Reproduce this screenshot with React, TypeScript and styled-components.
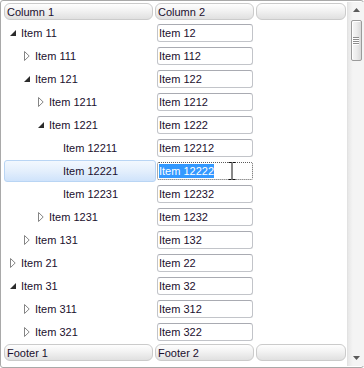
import React from 'react';
import styled, { createGlobalStyle, css } from 'styled-components';

const GlobalStyle = createGlobalStyle`
  html, body {
    margin: 0;
    padding: 0;
    background: #ffffff;
  }
  body {
    font-family: 'Liberation Sans', Arial, sans-serif;
    font-size: 11px;
    color: #1b0f2e;
  }
`;

type Row = {
  name: string;
  value: string;
  level: number;
  state: 'open' | 'closed' | 'leaf';
  selected?: boolean;
};

const rows: Row[] = [
  { name: 'Item 11', value: 'Item 12', level: 0, state: 'open' },
  { name: 'Item 111', value: 'Item 112', level: 1, state: 'closed' },
  { name: 'Item 121', value: 'Item 122', level: 1, state: 'open' },
  { name: 'Item 1211', value: 'Item 1212', level: 2, state: 'closed' },
  { name: 'Item 1221', value: 'Item 1222', level: 2, state: 'open' },
  { name: 'Item 12211', value: 'Item 12212', level: 3, state: 'leaf' },
  { name: 'Item 12221', value: 'Item 12222', level: 3, state: 'leaf', selected: true },
  { name: 'Item 12231', value: 'Item 12232', level: 3, state: 'leaf' },
  { name: 'Item 1231', value: 'Item 1232', level: 2, state: 'closed' },
  { name: 'Item 131', value: 'Item 132', level: 1, state: 'closed' },
  { name: 'Item 21', value: 'Item 22', level: 0, state: 'closed' },
  { name: 'Item 31', value: 'Item 32', level: 0, state: 'open' },
  { name: 'Item 311', value: 'Item 312', level: 1, state: 'closed' },
  { name: 'Item 321', value: 'Item 322', level: 1, state: 'closed' },
];

const Frame = styled.div`
  box-sizing: border-box;
  width: 364px;
  height: 368px;
  border: 1px solid #a9a9a9;
  border-radius: 3px;
  padding: 2px 1px 1px 3px;
  display: grid;
  grid-template-columns: 1fr 17px;
  column-gap: 1px;
`;

const Main = styled.div`
  display: flex;
  flex-direction: column;
`;

const columns = css`
  display: grid;
  grid-template-columns: 149px 99px 90px;
  column-gap: 2px;
`;

const HeaderRow = styled.div`
  ${columns};
  height: 17px;
  margin-bottom: 1px;
`;

const FooterRow = styled(HeaderRow)`
  margin: 1px 0 0;
`;

const HeaderCell = styled.div`
  box-sizing: border-box;
  height: 17px;
  border: 1px solid #cbcbcb;
  border-radius: 6px;
  background: linear-gradient(#fefefe 0%, #f2f2f2 45%, #e0e0e0 100%);
  padding: 1px 0 0 2px;
  line-height: 14px;
  white-space: nowrap;
  color: #1b0f2e;
`;

const List = styled.div`
  display: flex;
  flex-direction: column;
`;

const RowLine = styled.div`
  ${columns};
  height: 23px;
  position: relative;
`;

const TreeCell = styled.div<{ $level: number; $selected?: boolean }>`
  display: flex;
  align-items: center;
  padding-left: ${(p) => p.$level * 14}px;
  box-sizing: border-box;
  border: 1px solid transparent;
  border-radius: 3px;
  margin: 1px -3px 0 0;
  ${(p) =>
    p.$selected &&
    css`
      border-color: #b9d5f4;
      background: linear-gradient(#f3f8fe 0%, #e4effc 50%, #cfe3fb 100%);
    `}
`;

const Expander = styled.span`
  width: 16px;
  height: 16px;
  display: flex;
  align-items: center;
  justify-content: center;
  flex: none;
`;

const Label = styled.span`
  white-space: nowrap;
  margin-top: 0;
`;

const ValueCell = styled.div`
  display: flex;
  align-items: center;
  padding: 0 1px 0 2px;
  position: relative;
`;

const TextBox = styled.div<{ $focused?: boolean }>`
  box-sizing: border-box;
  width: 96px;
  height: 18px;
  border: 1px solid #c2c4c9;
  border-top-color: #a9abb2;
  border-radius: 3px;
  background: #ffffff;
  padding: 0 0 0 1px;
  line-height: 16px;
  white-space: nowrap;
  ${(p) =>
    p.$focused &&
    css`
      border: 1px dotted #5b5b5b;
      border-radius: 2px;
    `}
`;

const Selection = styled.span`
  background: #3399ff;
  color: #ffffff;
  padding: 1px 0;
`;

const Caret = styled.svg`
  position: absolute;
  left: 73px;
  top: 3px;
`;

const Scrollbar = styled.div`
  display: flex;
  flex-direction: column;
  align-items: center;
  background: linear-gradient(90deg, #e7e7e7 0%, #f4f4f4 30%, #f4f4f4 100%);
  border-left: 1px solid #e2e2e2;
  margin-top: -1px;
`;

const ArrowButton = styled.div`
  height: 16px;
  width: 100%;
  display: flex;
  align-items: center;
  justify-content: center;
`;

const Track = styled.div`
  flex: 1;
  width: 100%;
  display: flex;
  flex-direction: column;
  align-items: center;
`;

const Thumb = styled.div`
  box-sizing: border-box;
  width: 11px;
  height: 41px;
  margin-top: 2px;
  border: 1px solid #9b9b9b;
  border-radius: 2px;
  background: linear-gradient(90deg, #f6f6f6 0%, #ececec 50%, #d9d9d9 100%);
  box-shadow: inset 1px 1px 0 #ffffff;
  display: flex;
  flex-direction: column;
  align-items: center;
  justify-content: center;
  gap: 1px;
`;

const Grip = styled.span`
  width: 6px;
  height: 1px;
  background: #8d8d8d;
  box-shadow: 0 1px 0 #ffffff;
`;

const OpenArrow = () => (
  <svg width="6" height="6" viewBox="0 0 6 6">
    <polygon points="0,6 6,6 6,0" fill="#2b2b2b" />
  </svg>
);

const ClosedArrow = () => (
  <svg width="6" height="10" viewBox="0 0 6 10">
    <polygon points="0.5,0.5 5.2,5 0.5,9.5" fill="#ffffff" stroke="#858585" strokeWidth="1" />
  </svg>
);

const App: React.FC = () => (
  <>
    <GlobalStyle />
    <Frame>
      <Main>
        <HeaderRow>
          <HeaderCell>Column 1</HeaderCell>
          <HeaderCell>Column 2</HeaderCell>
          <HeaderCell />
        </HeaderRow>
        <List>
          {rows.map((r) => (
            <RowLine key={r.name}>
              <TreeCell $level={r.level} $selected={r.selected}>
                <Expander>
                  {r.state === 'open' && <OpenArrow />}
                  {r.state === 'closed' && <ClosedArrow />}
                </Expander>
                <Label>{r.name}</Label>
              </TreeCell>
              <ValueCell>
                <TextBox $focused={r.selected}>
                  {r.selected ? <Selection>{r.value}</Selection> : r.value}
                </TextBox>
                {r.selected && (
                  <Caret width="8" height="18" viewBox="0 0 8 18">
                    <path d="M0.5 0.5h3M4.5 0.5h3M4 1v16M0.5 17.5h3M4.5 17.5h3" stroke="#111" strokeWidth="1" />
                  </Caret>
                )}
              </ValueCell>
              <div />
            </RowLine>
          ))}
        </List>
        <FooterRow>
          <HeaderCell>Footer 1</HeaderCell>
          <HeaderCell>Footer 2</HeaderCell>
          <HeaderCell />
        </FooterRow>
      </Main>
      <Scrollbar>
        <ArrowButton>
          <svg width="7" height="4" viewBox="0 0 7 4">
            <polygon points="0,4 7,4 3.5,0" fill="#5a5a5a" />
          </svg>
        </ArrowButton>
        <Track>
          <Thumb>
            <Grip />
            <Grip />
            <Grip />
            <Grip />
          </Thumb>
        </Track>
        <ArrowButton>
          <svg width="7" height="4" viewBox="0 0 7 4">
            <polygon points="0,0 7,0 3.5,4" fill="#5a5a5a" />
          </svg>
        </ArrowButton>
      </Scrollbar>
    </Frame>
  </>
);

export default App;
